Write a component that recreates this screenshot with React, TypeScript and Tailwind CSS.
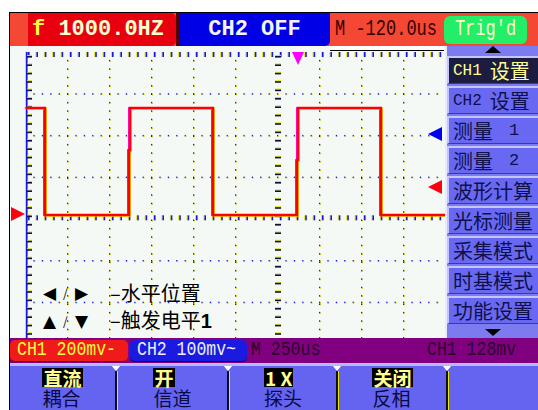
import React from 'react';

const MONO = "font-['Liberation_Mono','Noto_Sans_CJK_SC',monospace]";
const CJK = "font-['Noto_Sans_CJK_SC','Liberation_Mono',sans-serif]";

// plot grid, local coords (plot starts at screen x=10, y=46)
const AX = 16;
const TOP = 6;
const DX = 42;
const DY = 41.7;
const STEP = 8.4;
const W = 435;
const H = 292;
const CX = AX + DX * 6;
const CY = TOP + DY * 4 - 0.5;

const BLUE = '#1818d8';
const YEL = '#e4e400';

function range(from: number, to: number, step: number) {
  const out: number[] = [];
  for (let v = from; v <= to; v += step) out.push(Math.round(v * 10) / 10);
  return out;
}

function Grid() {
  const rows = [1, 2, 3, 5, 6, 7].map((k) => TOP + DY * k);
  const cols = [1, 2, 3, 4, 5, 7, 8, 9, 10].map((k) => AX + DX * k);
  const dots: React.ReactElement[] = [];
  rows.forEach((y, i) =>
    range(AX + STEP, W, STEP).forEach((x, j) => {
      dots.push(<rect key={`r${i}-${j}y`} x={x} y={y} width={1} height={1.5} fill={YEL} />);
      dots.push(<rect key={`r${i}-${j}b`} x={x - 1} y={y - 0.5} width={1.2} height={1.5} fill={BLUE} />);
    }),
  );
  cols.forEach((x, i) =>
    range(TOP + STEP, H, STEP).forEach((y, j) => {
      dots.push(<rect key={`c${i}-${j}y`} x={x} y={y} width={1} height={1.5} fill={YEL} />);
      dots.push(<rect key={`c${i}-${j}b`} x={x - 1} y={y - 0.5} width={1.2} height={1.5} fill={BLUE} />);
    }),
  );

  return (
    <g>
      {dots}
      {/* top ticks */}
      {range(AX + 2, W, STEP).map((x) => (
        <g key={`t${x}`}>
          <rect x={x - 1} y={TOP} width={1} height={5} fill={YEL} />
          <rect x={x} y={TOP} width={1.6} height={5} fill={BLUE} />
        </g>
      ))}
      {/* centre horizontal ticks */}
      {range(AX + 2, W, STEP).map((x) => (
        <g key={`h${x}`}>
          <rect x={x - 1} y={CY - 3} width={1} height={5} fill={YEL} />
          <rect x={x} y={CY - 3} width={1.6} height={5} fill={BLUE} />
        </g>
      ))}
      {/* left axis */}
      <rect x={AX - 1} y={TOP} width={1} height={H} fill={YEL} />
      <rect x={AX} y={TOP} width={1.6} height={H} fill={BLUE} />
      {range(TOP + 4, H, STEP).map((y) => (
        <g key={`l${y}`}>
          <rect x={AX + 1} y={y - 1} width={5} height={1} fill={YEL} />
          <rect x={AX + 1} y={y} width={5} height={1.6} fill="#101040" />
        </g>
      ))}
      {/* centre vertical ticks */}
      {range(TOP + 4, H, STEP).map((y) => (
        <g key={`v${y}`}>
          <rect x={CX - 3} y={y - 1} width={6} height={1} fill={YEL} />
          <rect x={CX - 3} y={y} width={6} height={1.6} fill="#101040" />
        </g>
      ))}
    </g>
  );
}

const TRACE = '16,62 35,62 35,169 119,169 119,104 120,104 120,62 203,62 203,169 287,169 287,114 288,114 288,62 371,62 371,169 435,169';

function Plot() {
  return (
    <div className="relative h-full w-[435px] bg-[#f5f9f5]">
      <svg width={W} height={H} viewBox={`0 0 ${W} ${H}`} className="block">
        <Grid />
        {/* memory window bar */}
        <rect x={320} y={0} width={114} height={4} fill="#ffffff" />
        <rect x={320} y={4} width={114} height={1} fill="#000000" />
        {/* trace */}
        <polyline points={TRACE} fill="none" stroke="#ff00ff" strokeWidth={1.5} transform="translate(-1.2 0)" />
        <polyline points={TRACE} fill="none" stroke={YEL} strokeWidth={1.5} transform="translate(1.2 1)" />
        <polyline points={TRACE} fill="none" stroke="#ff0000" strokeWidth={2.6} />
        {/* markers */}
        <polygon points="282,6 294,6 288,19" fill="#ff00ff" />
        <polygon points="418,88 432,81 432,95" fill="#0000f0" />
        <polygon points="418,141 432,134 432,148" fill="#ff0010" />
        <polygon points="15,168 1,161 1,175" fill="#ff0010" />
      </svg>
      <div className={`absolute left-[33px] top-[236px] flex flex-col gap-[5px] text-black ${CJK}`}>
        <div className="flex items-center leading-[22px]">
          <span className="w-[20px] font-['DejaVu_Sans'] text-[17px]">◀</span>
          <span className="w-[12px] text-[12px]">/</span>
          <span className="w-[35px] font-['DejaVu_Sans'] text-[17px]">▶</span>
          <span className="text-[20px]">–水平位置</span>
        </div>
        <div className="flex items-center leading-[22px]">
          <span className="w-[20px] font-['DejaVu_Sans'] text-[17px]">▲</span>
          <span className="w-[12px] text-[12px]">/</span>
          <span className="w-[35px] font-['DejaVu_Sans'] text-[17px]">▼</span>
          <span className="text-[20px]">–触发电平<b className="font-['Liberation_Sans'] font-bold">1</b></span>
        </div>
      </div>
    </div>
  );
}

const MENU = [
  { latin: 'CH1', cjk: '设置', active: true },
  { latin: 'CH2', cjk: '设置' },
  { cjk: '测量', tail: '1' },
  { cjk: '测量', tail: '2' },
  { cjk: '波形计算' },
  { cjk: '光标测量' },
  { cjk: '采集模式' },
  { cjk: '时基模式' },
  { cjk: '功能设置' },
];

function Menu() {
  return (
    <div className="flex h-full w-[93px] flex-col gap-[2px] border-l-2 border-[#e8e8ff] bg-[#7c7cf0]">
      <div className="flex h-[8px] items-start justify-center">
        <div className="h-0 w-0 border-x-[8px] border-b-[7px] border-x-transparent border-b-black" />
      </div>
      {MENU.map((m, i) => (
        <div
          key={i}
          className={`flex h-[28px] items-center border-l-2 border-t-2 border-b border-[#c4c4ff] border-b-[#3a3aa0] pl-[4px] leading-none ${
            m.active ? 'bg-[#1c1c40] text-[#ffff90]' : 'bg-[#6868f2] text-[#10104a]'
          }`}
        >
          {m.latin && <span className={`${MONO} mr-[8px] text-[16px]`}>{m.latin}</span>}
          <span className={`${CJK} text-[20px]`}>{m.cjk}</span>
          {m.tail && <span className={`${MONO} ml-[16px] text-[17px]`}>{m.tail}</span>}
        </div>
      ))}
      <div className="flex flex-1 items-center justify-center">
        <div className="h-0 w-0 border-x-[8px] border-t-[7px] border-x-transparent border-t-black" />
      </div>
    </div>
  );
}

function Header() {
  return (
    <div className={`flex h-[33px] items-stretch bg-[#f44834] ${MONO}`}>
      <div className="w-[18px]" />
      <div className="flex w-[148px] items-center rounded-r-[5px] bg-[#e8000e] pl-[4px] text-[22px] font-bold leading-none text-[#ffffd0]">
        <span className="text-[#ffff40]">f</span>&nbsp;1000.0HZ
      </div>
      <div className="w-[3px] bg-[#500000]" />
      <div className="flex w-[151px] items-center justify-center rounded-br-[5px] bg-[#0000e6] text-[22px] font-bold leading-none text-[#f4f4ff]">
        CH2 OFF
      </div>
      <div className="flex w-[114px] items-center pl-[5px] text-[17px] leading-none text-[#300000]">
        <span className="inline-block scale-y-125">M -120.0us</span>
      </div>
      <div className="flex w-[83px] items-center justify-center self-center">
        <div className="flex h-[28px] w-full items-center justify-center rounded-[6px] bg-[#22ee68] text-[17px] leading-none text-[#ffffc8]">
          <span className="inline-block scale-y-125">Trig'd</span>
        </div>
      </div>
    </div>
  );
}

function StatusBar() {
  return (
    <div className={`flex h-[25px] items-center gap-[2px] bg-[#800080] text-[16.5px] leading-none ${MONO}`}>
      <div className="flex h-[22px] w-[118px] items-center rounded-[5px] border-b border-[#700000] bg-[#f01a1a] pl-[7px] text-[#ffff40]">
        <span className="inline-block scale-y-125">CH1 200mv-</span>
      </div>
      <div className="flex h-[22px] w-[117px] items-center rounded-[5px] border-b border-[#000070] bg-[#1a1ae0] pl-[7px] text-[#f0f0ff]">
        <span className="inline-block scale-y-125">CH2 100mv~</span>
      </div>
      <div className="w-[176px] pl-[2px] text-[#2a002a]">
        <span className="inline-block scale-y-125">M 250us</span>
      </div>
      <div className="text-[#2a002a]">
        <span className="inline-block scale-y-125">CH1 128mv</span>
      </div>
    </div>
  );
}

const KEYS = [
  { w: 'w-[105px]', top: '直流', bottom: '耦合' },
  { w: 'w-[109px]', top: '开', bottom: '信道' },
  { w: 'w-[106px]', top: '1 X', bottom: '探头' },
  { w: 'w-[107px]', top: '关闭', bottom: '反相' },
  { w: 'flex-1', top: '', bottom: '' },
];

function Separator() {
  return (
    <div className="relative flex w-[3px] shrink-0">
      <div className="mt-[5px] w-[2px] bg-[#101010]" />
      <div className="mt-[5px] w-[1px] bg-[#e8e800]" />
      <div className="absolute -left-[4px] -top-[1px] h-0 w-0 border-x-[5px] border-t-[6px] border-x-transparent border-t-white" />
    </div>
  );
}

function Softkeys() {
  return (
    <div className={`flex flex-1 overflow-hidden border-t-[3px] border-[#b8b8f8] bg-[#6464f0] ${CJK}`}>
      {KEYS.map((k, i) => (
        <React.Fragment key={i}>
          {i > 0 && <Separator />}
          <div className={`${k.w} flex justify-center pt-[2px]`}>
            {k.top && (
              <div className="flex flex-col items-start gap-[1px] text-[19px] leading-[19px]">
                <span className="bg-black px-[1px] font-bold text-[#ffff90]">{k.top}</span>
                <span className="text-[#0a0a40]">{k.bottom}</span>
              </div>
            )}
          </div>
        </React.Fragment>
      ))}
    </div>
  );
}

export default function App() {
  return (
    <div className="h-[410px] w-[538px] overflow-hidden bg-white pl-[9px] pt-[12px]">
      <div className="flex h-full flex-col border-l border-t border-black">
        <Header />
        <div className="flex h-[292px]">
          <Plot />
          <Menu />
        </div>
        <StatusBar />
        <Softkeys />
      </div>
    </div>
  );
}
